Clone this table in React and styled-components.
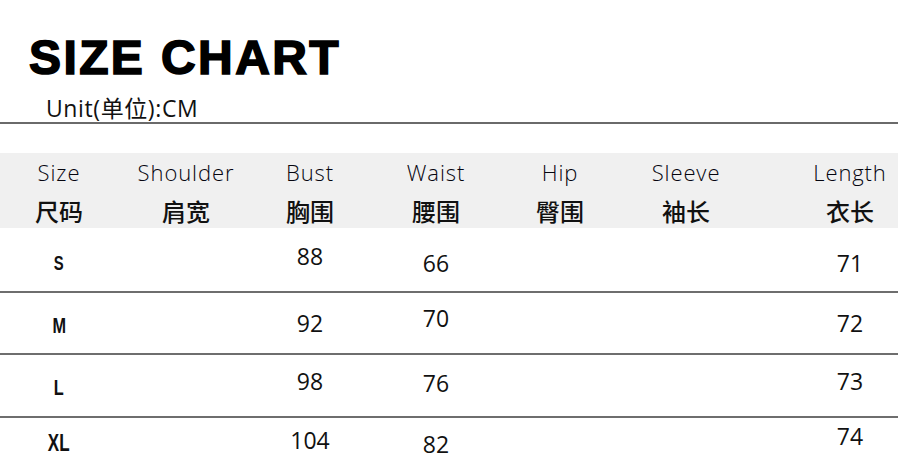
import React from "react";
import styled, { createGlobalStyle } from "styled-components";

const GlobalStyle = createGlobalStyle`
  html, body { margin: 0; padding: 0; background: #ffffff; }
  #root { width: 898px; }
`;

const COLUMNS = "118px 136px 112px 140px 108px 144px 1fr";

const Page = styled.div`
  width: 898px;
  height: 464px;
  overflow: hidden;
  background: #ffffff;
  display: flex;
  flex-direction: column;
`;

const Title = styled.h1`
  margin: 0;
  padding: 34px 0 0 29px;
  font-family: "Liberation Sans", Arial, sans-serif;
  font-weight: 700;
  font-size: 48px;
  line-height: 48px;
  letter-spacing: 2.4px;
  color: #000;
  -webkit-text-stroke: 1.6px #000;
`;

const Unit = styled.div`
  padding: 13px 0 0 46px;
  font-family: "Open Sans", "Noto Sans CJK SC", sans-serif;
  font-size: 23px;
  line-height: 26px;
  letter-spacing: 0.6px;
  color: #111;
`;

const Divider = styled.div`
  margin-top: 1px;
  height: 0;
  border-top: 2px solid #6a6a6a;
`;

const HeaderBand = styled.div`
  margin-top: 29px;
  height: 75px;
  background: #f0f0f0;
  display: grid;
  grid-template-columns: ${COLUMNS};
  box-sizing: border-box;
  padding-top: 6px;
`;

const HeadCell = styled.div`
  display: flex;
  flex-direction: column;
  align-items: center;
  padding-left: ${(p) => (p.$last ? "44px" : "0")};
`;

const HeadEn = styled.span`
  font-family: "Open Sans", "Noto Sans", sans-serif;
  font-weight: 300;
  font-size: 22px;
  line-height: 26px;
  letter-spacing: 0.9px;
  color: #05050f;
  white-space: nowrap;
`;

const HeadZh = styled.span`
  margin-top: 12px;
  font-family: "Noto Sans CJK SC", sans-serif;
  font-weight: 500;
  font-size: 24px;
  line-height: 28px;
  color: #111;
  white-space: nowrap;
`;

const Row = styled.div`
  display: grid;
  grid-template-columns: ${COLUMNS};
  height: ${(p) => p.$h}px;
  box-sizing: border-box;
  border-top: ${(p) => (p.$line ? "2px solid #6e6e6e" : "none")};
  align-items: center;
`;

const Cell = styled.div`
  display: flex;
  justify-content: center;
  padding-left: ${(p) => (p.$last ? "44px" : "0")};
`;

const SizeLabel = styled.span`
  display: inline-block;
  font-family: "Liberation Sans", Arial, sans-serif;
  font-weight: 700;
  font-size: ${(p) => p.$fs}px;
  line-height: 1;
  color: #111;
  transform: translateY(${(p) => p.$dy}px) scaleX(0.74);
`;

const Value = styled.span`
  display: inline-block;
  font-family: "Open Sans", "Noto Sans", sans-serif;
  font-size: 23px;
  line-height: 1;
  color: #111;
  transform: translateY(${(p) => p.$dy}px);
`;

const headers = [
  ["Size", "尺码"],
  ["Shoulder", "肩宽"],
  ["Bust", "胸围"],
  ["Waist", "腰围"],
  ["Hip", "臀围"],
  ["Sleeve", "袖长"],
  ["Length", "衣长"],
];

const rows = [
  { size: "S", sfs: 20, sdy: 3, h: 63, line: false, vals: [null, ["88", -3], ["66", 4], null, null, ["71", 4]] },
  { size: "M", sfs: 22, sdy: 3, h: 62, line: true, vals: [null, ["92", 0], ["70", -5], null, null, ["72", 0]] },
  { size: "L", sfs: 22, sdy: 2, h: 63, line: true, vals: [null, ["98", -4], ["76", -2], null, null, ["73", -4]] },
  { size: "XL", sfs: 23, sdy: 2, h: 48, line: true, vals: [null, ["104", -1], ["82", 3], null, null, ["74", -5]] },
];

export default function App() {
  return (
    <>
      <GlobalStyle />
      <Page>
        <Title>SIZE CHART</Title>
        <Unit>Unit(单位):CM</Unit>
        <Divider />
        <HeaderBand>
          {headers.map(([en, zh], i) => (
            <HeadCell key={en} $last={i === headers.length - 1}>
              <HeadEn>{en}</HeadEn>
              <HeadZh>{zh}</HeadZh>
            </HeadCell>
          ))}
        </HeaderBand>
        {rows.map((r) => (
          <Row key={r.size} $h={r.h} $line={r.line}>
            <Cell>
              <SizeLabel $fs={r.sfs} $dy={r.sdy}>{r.size}</SizeLabel>
            </Cell>
            {r.vals.map((v, i) => (
              <Cell key={i} $last={i === r.vals.length - 1}>
                {v ? <Value $dy={v[1]}>{v[0]}</Value> : null}
              </Cell>
            ))}
          </Row>
        ))}
      </Page>
    </>
  );
}
